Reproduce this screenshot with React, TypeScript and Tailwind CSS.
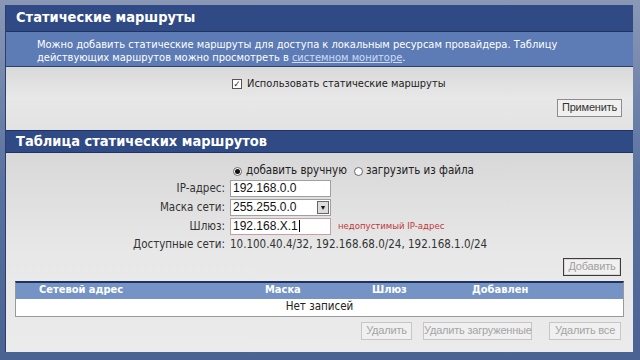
import { useState } from "react";

const cond = { fontFamily: '"DejaVu Sans Condensed", "DejaVu Sans", Verdana, sans-serif' };
const arial = { fontFamily: '"Liberation Sans", Arial, sans-serif' };

function Btn({ label, w, disabled, dark }: { label: string; w: string; disabled?: boolean; dark?: boolean }) {
  return (
    <button
      style={arial}
      className={
        "h-[18px] text-[11px] leading-none whitespace-nowrap tracking-[-0.2px] bg-[#f0f0f0] border " +
        w +
        " " +
        (dark
          ? "border-[#3c3c3c] text-[#a0a0a0] shadow-[inset_0_0_0_1px_#d8d8d8]"
          : disabled
          ? "border-[#c6c6c6] text-[#a4a4a4]"
          : "border-[#8c8c8c] text-[#333]")
      }
    >
      {label}
    </button>
  );
}

function Radio({ on }: { on: boolean }) {
  return (
    <span className="w-[9px] h-[9px] rounded-full border border-[#666] bg-white flex items-center justify-center shrink-0">
      {on && <span className="w-[5px] h-[5px] rounded-full bg-[#111]" />}
    </span>
  );
}

export default function App() {
  const [useStatic, setUseStatic] = useState(true);
  const [mode, setMode] = useState("manual");

  return (
    <div
      className="w-[640px] h-[360px] overflow-hidden bg-gradient-to-b from-[#8a98b6] via-[#5a72a0] to-[#4a6392] pl-[5px] pr-[7px] pt-[5px] pb-[8px]"
      style={cond}
    >
      <div className="h-full flex flex-col bg-[#dedede] border-l border-[#2a3f6c]">
        {/* section 1 */}
        <div className="h-[27px] shrink-0 bg-[#2f4a84] border-b border-[#1f3360] flex items-center px-[10px]">
          <span className="text-white font-bold text-[14.5px]">Статические маршруты</span>
        </div>
        <div className="h-[35px] shrink-0 bg-[#5d7bb4] border-b border-[#2c416e] pl-[31px] pt-[6px] text-white text-[11px] leading-[13px]">
          Можно добавить статические маршруты для доступа к локальным ресурсам провайдера. Таблицу
          <br />
          действующих маршрутов можно просмотреть в{" "}
          <span className="underline text-[#cfdcf5]">системном мониторе</span>.
        </div>
        <div className="h-[63px] shrink-0 bg-gradient-to-b from-[#d9d9d9] via-[#e8e8e8] to-[#e2e2e2] flex flex-col pt-[10px] pr-[11px]">
          <label className="flex items-center gap-[5px] text-[11px] text-[#222] ml-[226px] h-[14px]">
            <span
              onClick={() => setUseStatic(!useStatic)}
              className="w-[10px] h-[10px] border border-[#555] bg-white flex items-center justify-center text-[9px] leading-none font-bold text-[#111]"
            >
              {useStatic ? "✓" : ""}
            </span>
            Использовать статические маршруты
          </label>
          <div className="self-end mt-[3px]">
            <Btn label="Применить" w="w-[65px]" />
          </div>
        </div>

        {/* section 2 */}
        <div className="h-[23px] shrink-0 bg-[#2f4a84] border-y border-[#1f3360] flex items-center px-[10px]">
          <span className="text-white font-bold text-[14.5px]">Таблица статических маршрутов</span>
        </div>
        <div className="flex-1 bg-gradient-to-b from-[#d8d8d8] via-[#e8e8e8] to-[#ebebeb] px-[9px] pt-[11px]">
          <div className="flex items-center text-[11.5px] text-[#222] ml-[218px] h-[14px]">
            <label className="flex items-center gap-[4px]" onClick={() => setMode("manual")}>
              <Radio on={mode === "manual"} />
              добавить вручную
            </label>
            <label className="flex items-center gap-[3px] ml-[7px]" onClick={() => setMode("file")}>
              <Radio on={mode === "file"} />
              загрузить из файла
            </label>
          </div>

          <div className="grid grid-cols-[210px_1fr] gap-x-[5px] gap-y-[1.5px] items-center mt-[2px] text-[11.5px] text-[#333]">
            <span className="text-right">IP-адрес:</span>
            <div className="w-[101px] h-[17px] bg-white border border-[#a0a0a0] px-[2px] text-[12px] leading-[15px] text-[#111]" style={arial}>
              192.168.0.0
            </div>
            <span className="text-right">Маска сети:</span>
            <div className="w-[101px] h-[17px] bg-white border border-[#a0a0a0] flex items-center justify-between pl-[2px] pr-[1px] text-[12px] text-[#111]" style={arial}>
              <span>255.255.0.0</span>
              <span className="w-[12px] h-[13px] bg-[#dcdcdc] border border-[#666] flex items-center justify-center text-[7px] leading-none">▼</span>
            </div>
            <span className="text-right">Шлюз:</span>
            <div className="flex items-center gap-[7px]">
              <div className="w-[101px] h-[17px] bg-white border border-[#c9a0a0] px-[2px] text-[12px] leading-[15px] text-[#111] flex items-center" style={arial}>
                192.168.X.1<span className="h-[12px] border-l border-black ml-[1px]" />
              </div>
              <span className="text-[#c03838] text-[9.5px]">недопустимый IP-адрес</span>
            </div>
            <span className="text-right">Доступные сети:</span>
            <span>10.100.40.4/32, 192.168.68.0/24, 192.168.1.0/24</span>
          </div>

          <div className="flex justify-end mt-[4px] mr-[3px]">
            <Btn label="Добавить" w="w-[58px]" dark />
          </div>

          <div className="mt-[5px] border border-[#999] border-t-2 border-t-[#1f3360] bg-white">
            <div className="h-[16px] bg-[#7593c5] flex items-center text-white font-bold text-[11px]">
              <span className="w-[249px] pl-[23px]">Сетевой адрес</span>
              <span className="w-[107px]">Маска</span>
              <span className="w-[100px]">Шлюз</span>
              <span>Добавлен</span>
            </div>
            <div className="h-[17px] flex items-center justify-center text-[11.5px] text-[#222]">Нет записей</div>
          </div>

          <div className="flex justify-end mt-[5px] mr-[3px]">
            <Btn label="Удалить" w="w-[51px]" disabled />
            <span className="w-[11px]" />
            <Btn label="Удалить загруженные" w="w-[109px]" disabled />
            <span className="w-[17px]" />
            <Btn label="Удалить все" w="w-[72px]" disabled />
          </div>
        </div>
      </div>
    </div>
  );
}
